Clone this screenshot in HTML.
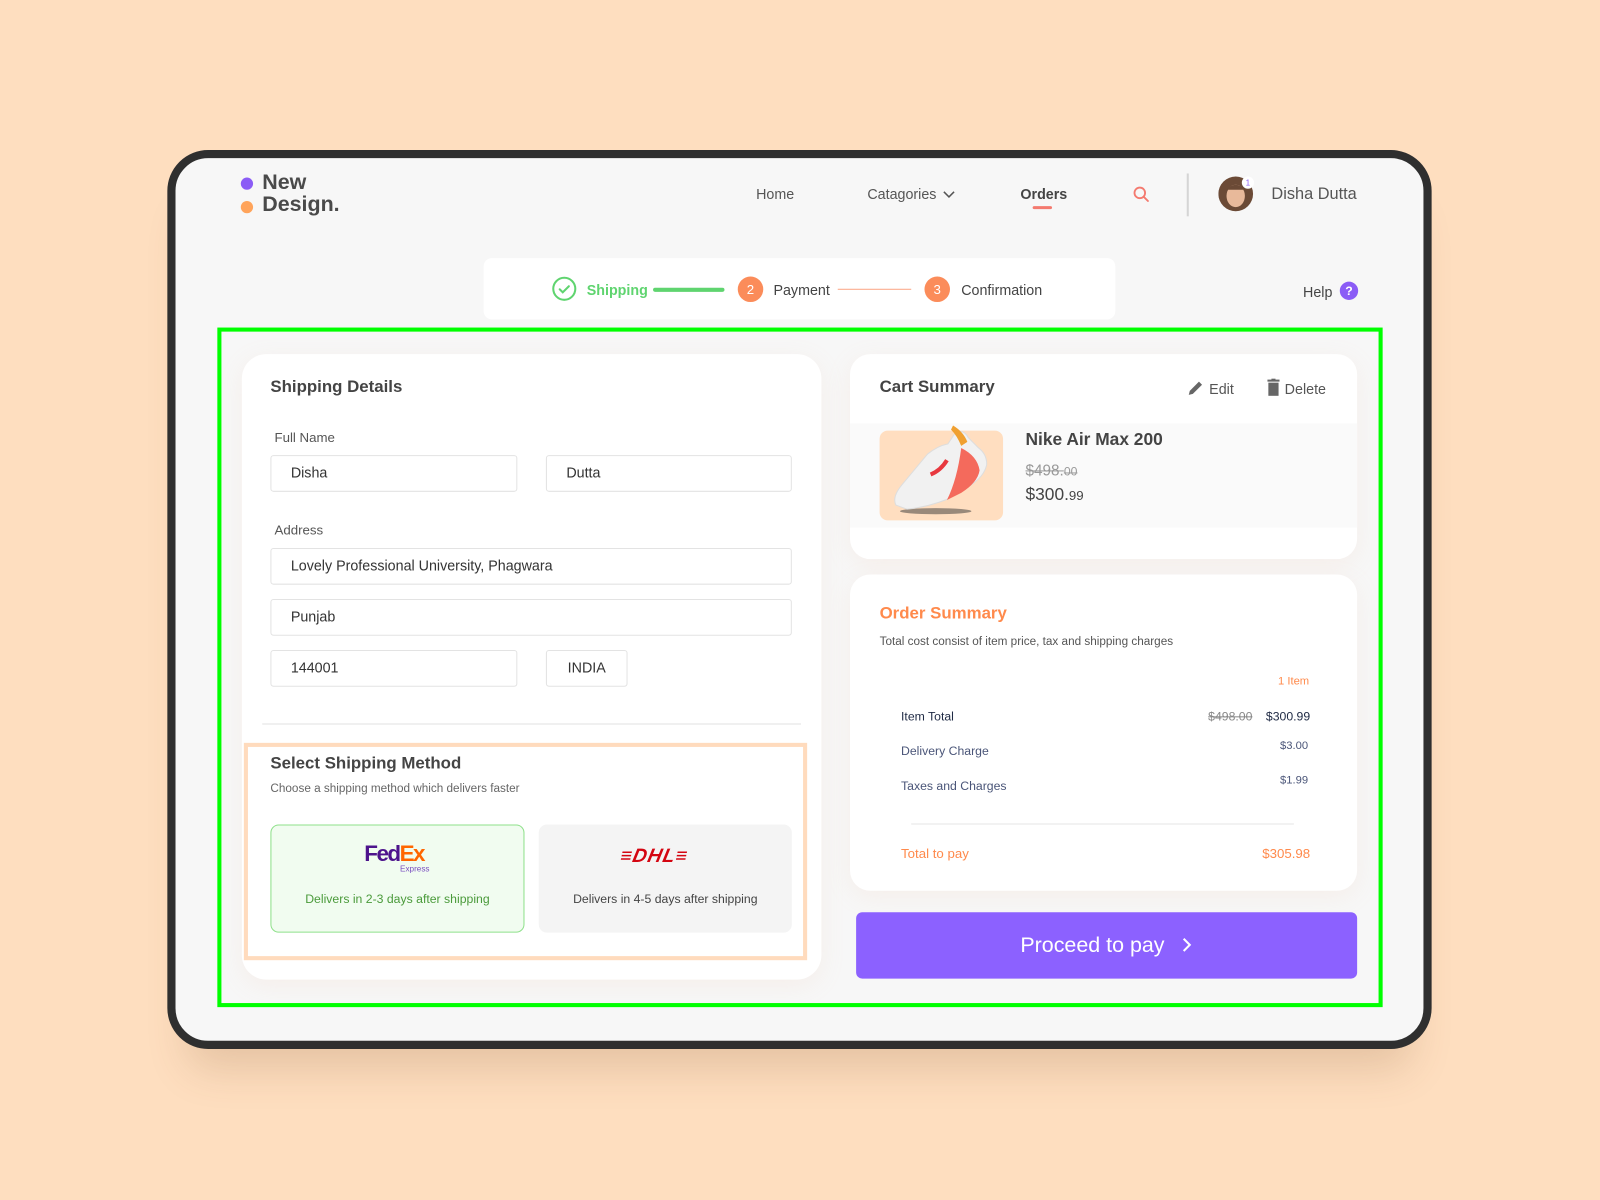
<!DOCTYPE html>
<html><head><meta charset="utf-8">
<style>
*{margin:0;padding:0;box-sizing:border-box}
html,body{width:1600px;height:1200px;overflow:hidden;background:#fedebf}
body{font-family:"Liberation Sans",sans-serif;color:#444}
#s{position:absolute;left:0;top:0;width:1568px;height:1176px;transform:scale(1.0204);transform-origin:0 0}
.a{position:absolute;white-space:nowrap}
.frame{position:absolute;left:164px;top:147px;width:1239px;height:881px;border:8px solid #2f2f2f;border-radius:40px;background:#f7f7f7;box-shadow:0 40px 40px -20px rgba(120,80,40,.18)}
.card{position:absolute;background:#fff;border-radius:24px;box-shadow:0 6px 24px rgba(240,180,150,.12)}
.inp{position:absolute;border:1.5px solid #e3e3e3;border-radius:3px;background:#fff;font-size:14px;color:#333;padding-left:19px;line-height:33px}
.lbl{font-size:13px;color:#555}
.h{font-weight:bold;font-size:16.5px;color:#444}
.r{text-align:right}
</style></head><body><div id="s">
<div class="frame"></div>
<!-- logo -->
<div class="a" style="left:236px;top:174px;width:12px;height:12px;border-radius:50%;background:#8b5cf6"></div>
<div class="a" style="left:236px;top:197px;width:12px;height:12px;border-radius:50%;background:#ffa45b"></div>
<div class="a" style="left:257px;top:168px;font-size:21px;font-weight:bold;color:#4a4a4a;line-height:22px">New<br>Design.</div>
<!-- nav -->
<div class="a" style="left:741px;top:182px;font-size:14px;color:#555">Home</div>
<div class="a" style="left:850px;top:182px;font-size:14px;color:#555">Catagories <svg width="12" height="8" viewBox="0 0 12 8" style="margin-left:2px"><path d="M1 1l5 5 5-5" stroke="#555" stroke-width="1.5" fill="none"/></svg></div>
<div class="a" style="left:1000px;top:182px;font-size:14px;color:#444;font-weight:bold">Orders</div>
<div class="a" style="left:1012px;top:202px;width:19px;height:3px;border-radius:2px;background:#f47a6f"></div>
<svg class="a" style="left:1110px;top:182px" width="17" height="17" viewBox="0 0 17 17"><circle cx="7" cy="7" r="5.2" stroke="#f47a6f" stroke-width="1.8" fill="none"/><path d="M11 11l4 4" stroke="#f47a6f" stroke-width="1.8" stroke-linecap="round"/></svg>
<div class="a" style="left:1163px;top:170px;width:2px;height:42px;background:#d5d5d5"></div>
<svg class="a" style="left:1194px;top:172px" width="36" height="36" viewBox="0 0 36 36"><circle cx="17" cy="18" r="17" fill="#6b4a36"/><ellipse cx="17" cy="20" rx="9" ry="11" fill="#e8b99a"/><path d="M8 14q9-10 18 0" fill="#6b4a36"/><circle cx="29" cy="7" r="6" fill="#fff"/><text x="29" y="10" font-size="8" fill="#8b5cf6" text-anchor="middle" font-family="Liberation Sans">1</text></svg>
<div class="a" style="left:1246px;top:182px;font-size:16px;color:#555">Disha Dutta</div>
<!-- stepper -->
<div class="a" style="left:474px;top:253px;width:619px;height:60px;background:#fff;border-radius:8px"></div>
<svg class="a" style="left:541px;top:271px" width="24" height="24" viewBox="0 0 24 24"><circle cx="12" cy="12" r="10.8" stroke="#5fd46f" stroke-width="2" fill="none"/><path d="M7.5 12.5l3 3 6-6" stroke="#5fd46f" stroke-width="2" fill="none" stroke-linecap="round"/></svg>
<div class="a" style="left:575px;top:276px;font-size:14px;color:#5fd46f;font-weight:bold">Shipping</div>
<div class="a" style="left:640px;top:282px;width:70px;height:4px;border-radius:2px;background:#5fd46f"></div>
<div class="a" style="left:723px;top:271px;width:25px;height:25px;border-radius:50%;background:#fb8c5a;color:#fff;font-size:13px;text-align:center;line-height:25px">2</div>
<div class="a" style="left:758px;top:276px;font-size:14px;color:#444">Payment</div>
<div class="a" style="left:821px;top:283px;width:72px;height:1px;background:#fba585"></div>
<div class="a" style="left:906px;top:271px;width:25px;height:25px;border-radius:50%;background:#fb8c5a;color:#fff;font-size:13px;text-align:center;line-height:25px">3</div>
<div class="a" style="left:942px;top:276px;font-size:14px;color:#444">Confirmation</div>
<div class="a" style="left:1277px;top:278px;font-size:14px;color:#444">Help</div>
<div class="a" style="left:1313px;top:276px;width:18px;height:18px;border-radius:50%;background:#8b5cf6;color:#fff;font-size:12px;font-weight:bold;text-align:center;line-height:18px">?</div>
<!-- green outline -->
<div class="a" style="left:213px;top:321px;width:1142px;height:666px;border:4px solid #0f0"></div>
<!-- left card -->
<div class="card" style="left:237px;top:347px;width:568px;height:613px"></div>
<div class="a h" style="left:265px;top:370px">Shipping Details</div>
<div class="a lbl" style="left:269px;top:421px">Full Name</div>
<div class="inp" style="left:265px;top:446px;width:242px;height:36px">Disha</div>
<div class="inp" style="left:535px;top:446px;width:241px;height:36px">Dutta</div>
<div class="a lbl" style="left:269px;top:512px">Address</div>
<div class="inp" style="left:265px;top:537px;width:511px;height:36px">Lovely Professional University, Phagwara</div>
<div class="inp" style="left:265px;top:587px;width:511px;height:36px">Punjab</div>
<div class="inp" style="left:265px;top:637px;width:242px;height:36px">144001</div>
<div class="inp" style="left:535px;top:637px;width:80px;height:36px;padding:0;text-align:center">INDIA</div>
<div class="a" style="left:257px;top:709px;width:528px;height:1px;background:#e2e2e2"></div>
<div class="a" style="left:239px;top:728px;width:552px;height:213px;border:4px solid #ffdbbd"></div>
<div class="a h" style="left:265px;top:739px">Select Shipping Method</div>
<div class="a" style="left:265px;top:767px;font-size:11.5px;color:#666">Choose a shipping method which delivers faster</div>
<div class="a" style="left:265px;top:808px;width:249px;height:106px;background:#f1fcf0;border:1.5px solid #8ee08a;border-radius:8px"></div>
<div class="a" style="left:357px;top:824px;font-size:22px;font-weight:bold;letter-spacing:-1.5px;color:#4d148c">Fed<span style="color:#ff6600">Ex</span></div>
<div class="a" style="left:392px;top:847px;font-size:8px;color:#7a4fc0">Express</div>
<div class="a" style="left:265px;top:874px;width:249px;text-align:center;font-size:12px;color:#4a9a3a">Delivers in 2-3 days after shipping</div>
<div class="a" style="left:528px;top:808px;width:248px;height:106px;background:#f4f4f4;border-radius:8px"></div>
<div class="a" style="left:608px;top:829px;font-size:19px;font-weight:bold;font-style:italic;color:#d40511;letter-spacing:1px;transform:skewX(-12deg)">&#8801;DHL&#8801;</div>
<div class="a" style="left:528px;top:874px;width:248px;text-align:center;font-size:12px;color:#444">Delivers in 4-5 days after shipping</div>
<!-- cart card -->
<div class="card" style="left:833px;top:347px;width:497px;height:201px;border-radius:20px"></div>
<div class="a h" style="left:862px;top:370px">Cart Summary</div>
<svg class="a" style="left:1164px;top:372px" width="16" height="16" viewBox="0 0 16 16"><path d="M1 15l1-4 9-9 3 3-9 9z" fill="#666"/></svg>
<div class="a" style="left:1185px;top:373px;font-size:14px;color:#555">Edit</div>
<svg class="a" style="left:1242px;top:371px" width="12" height="17" viewBox="0 0 12 17"><rect x="0" y="1" width="12" height="2" fill="#666"/><rect x="4" y="0" width="4" height="2" fill="#666"/><rect x="1" y="4" width="10" height="13" fill="#666"/></svg>
<div class="a" style="left:1259px;top:373px;font-size:14px;color:#555">Delete</div>
<div class="a" style="left:833px;top:415px;width:497px;height:102px;background:#fafafa"></div>
<div class="a" style="left:862px;top:422px;width:121px;height:88px;background:#ffdec0;border-radius:8px"></div>
<svg class="a" style="left:872px;top:415px" width="105" height="92" viewBox="0 0 105 92"><ellipse cx="45" cy="86" rx="35" ry="3" fill="#333" opacity=".5"/><path d="M6 80q-4-8 6-20l25-30q10-8 20-10l8-12q8-2 12 6l10 10q8 6 8 16q-2 12-18 22l-20 12q-20 8-40 10z" fill="#f1f1f1" stroke="#ddd"/><path d="M70 24q16 8 18 22q-2 12-18 22l-14 7q10-20 14-51z" fill="#f46a5c"/><path d="M62 2q10 6 14 16l-6 4q-4-10-10-16z" fill="#f0a030"/><path d="M40 50q10-4 16-14" stroke="#e8383f" stroke-width="4" fill="none"/></svg>
<div class="a" style="left:1005px;top:421px;font-size:17px;font-weight:bold;color:#444">Nike Air Max 200</div>
<div class="a" style="left:1005px;top:453px;font-size:15px;color:#999;text-decoration:line-through">$498.<span style="font-size:12px">00</span></div>
<div class="a" style="left:1005px;top:475px;font-size:17px;color:#444">$300.<span style="font-size:13px">99</span></div>
<!-- order summary -->
<div class="card" style="left:833px;top:563px;width:497px;height:310px;border-radius:20px"></div>
<div class="a" style="left:862px;top:592px;font-size:16.5px;font-weight:bold;color:#ff8a4c">Order Summary</div>
<div class="a" style="left:862px;top:623px;font-size:11.5px;color:#555">Total cost consist of item price, tax and shipping charges</div>
<div class="a r" style="left:1183px;top:662px;width:100px;font-size:11px;color:#ff8a4c">1 Item</div>
<div class="a" style="left:883px;top:695px;font-size:12px;color:#1f2a44">Item Total</div>
<div class="a" style="left:1184px;top:695px;font-size:12px;color:#888;text-decoration:line-through">$498.00</div>
<div class="a r" style="left:1184px;top:695px;width:100px;font-size:12px;color:#1f2a44">$300.99</div>
<div class="a" style="left:883px;top:729px;font-size:12px;color:#4a5578">Delivery Charge</div>
<div class="a r" style="left:1182px;top:725px;width:100px;font-size:11px;color:#4a5578">$3.00</div>
<div class="a" style="left:883px;top:763px;font-size:12px;color:#4a5578">Taxes and Charges</div>
<div class="a r" style="left:1182px;top:759px;width:100px;font-size:11px;color:#4a5578">$1.99</div>
<div class="a" style="left:893px;top:807px;width:375px;height:1px;background:#e6e6e6"></div>
<div class="a" style="left:883px;top:829px;font-size:13px;color:#ff8a4c">Total to pay</div>
<div class="a r" style="left:1184px;top:829px;width:100px;font-size:13px;color:#ff8a4c">$305.98</div>
<!-- button -->
<div class="a" style="left:839px;top:894px;width:491px;height:65px;background:#8c61ff;border-radius:6px;color:#fff;font-size:21px;text-align:center;line-height:65px">Proceed to pay <svg width="12" height="16" viewBox="0 0 12 16" style="margin-left:10px;vertical-align:-1px"><path d="M3 2l6 6-6 6" stroke="#fff" stroke-width="2" fill="none"/></svg></div>
</div></body></html>
